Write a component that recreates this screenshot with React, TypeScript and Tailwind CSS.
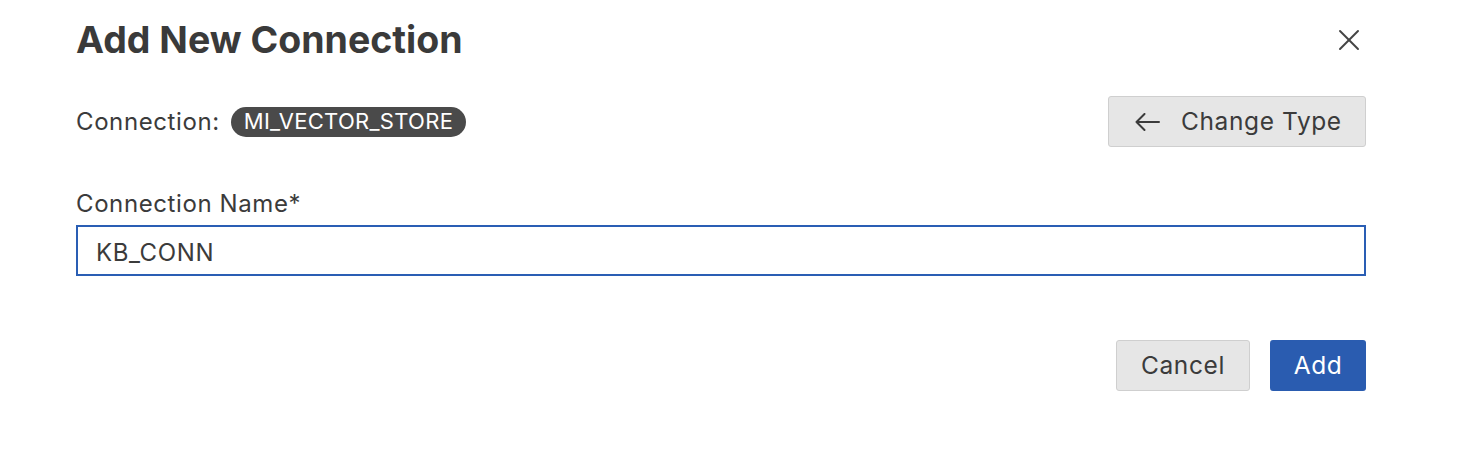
import { X } from "lucide-react"

export default function App() {
  return (
    <div
      className="w-[1482px] h-[462px] bg-white text-[#3b3b3b] pl-[76px] pr-[116px] pt-[17px]"
      style={{ fontFamily: "Inter, 'Noto Sans', sans-serif" }}
    >
      {/* Header */}
      <div className="flex items-center justify-between h-[46px]">
        <h1 className="text-[37.5px] font-bold text-[#3a3a3a]">Add New Connection</h1>
        <button className="-mr-px text-[#444]">
          <X size={36} strokeWidth={1.3} />
        </button>
      </div>

      {/* Connection type */}
      <div className="flex items-center justify-between mt-[33px]">
        <div className="flex items-center gap-[11px] tracking-[0.6px]">
          <span className="text-[24px]">Connection:</span>
          <span className="h-[30px] px-[13px] rounded-full bg-[#4a4a4a] text-white text-[22px] tracking-[0.3px] flex items-center">
            MI_VECTOR_STORE
          </span>
        </div>
        <button className="h-[51px] w-[258px] flex items-center gap-[21px] pl-[26px] bg-[#e6e6e6] border border-[#cfcfcf] rounded-[3px] text-[24.5px] tracking-[0.6px]">
          <svg width="25" height="18" viewBox="0 0 25 18" fill="none" stroke="currentColor" strokeWidth="2" strokeLinecap="round" strokeLinejoin="round">
            <path d="M24 9H1.5M9.5 1L1.5 9l8 8" />
          </svg>
          Change Type
        </button>
      </div>

      {/* Name field */}
      <div className="mt-[42px] tracking-[0.6px]">
        <label className="block text-[24px] leading-[30px]">Connection Name*</label>
        <input
          value="KB_CONN"
          readOnly
          className="mt-[6px] w-full h-[51px] border-2 border-[#2a5eb4] px-[18px] pt-[3px] text-[24px] tracking-[0.6px] text-[#3b3b3b] outline-none"
        />
      </div>

      {/* Actions */}
      <div className="flex justify-end gap-[20px] mt-[64px] tracking-[0.6px]">
        <button className="h-[51px] w-[134px] bg-[#e6e6e6] border border-[#cfcfcf] rounded-[3px] text-[24.5px]">
          Cancel
        </button>
        <button className="h-[51px] w-[96px] bg-[#2a5cb0] rounded-[3px] text-white text-[24.5px]">Add</button>
      </div>
    </div>
  )
}
